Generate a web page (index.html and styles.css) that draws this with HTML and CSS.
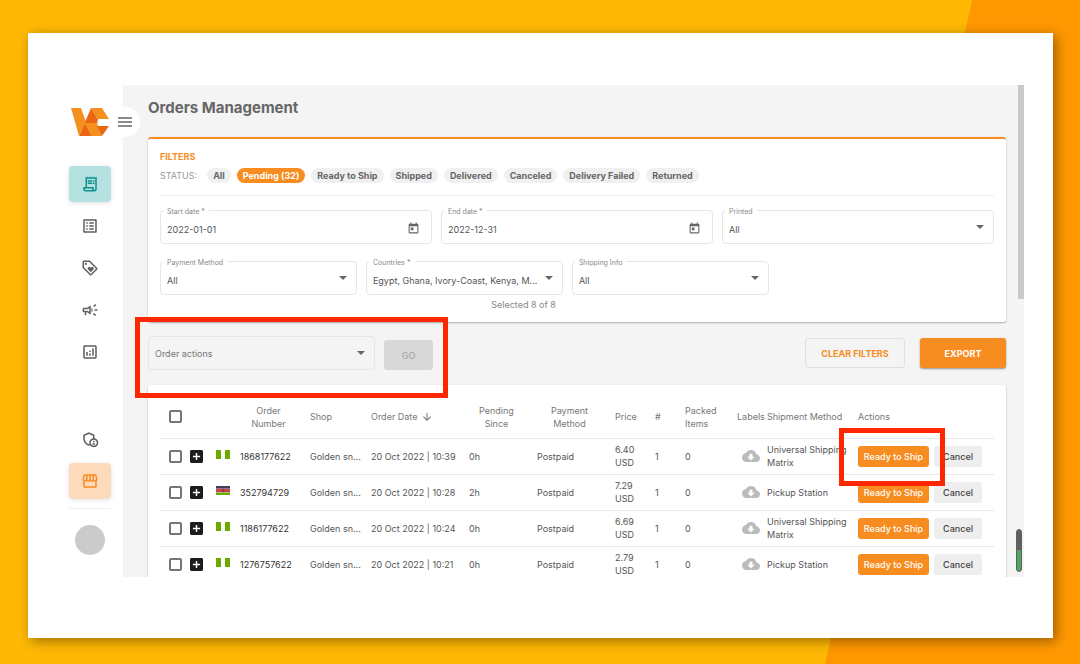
FILE: index.html
```html
<!DOCTYPE html>
<html lang="en">
<head>
    <meta charset="UTF-8">
    <meta name="viewport" content="width=device-width, initial-scale=1.0">
    <title>Orders Management</title>
    <link rel="stylesheet" href="styles.css">
</head>
<body>
    <!-- shared icons -->
    <svg class="sprite" aria-hidden="true">
        <symbol id="calendar" viewBox="0 0 24 24"><path d="M19 3h-1V1h-2v2H8V1H6v2H5c-1.11 0-1.99.9-1.99 2L3 19c0 1.1.89 2 2 2h14c1.1 0 2-.9 2-2V5c0-1.1-.9-2-2-2zm0 16H5V8h14v11zM7 10h5v5H7z"/></symbol>
        <symbol id="add-box" viewBox="3 3 18 18"><path d="M19 3H5c-1.11 0-2 .9-2 2v14c0 1.1.89 2 2 2h14c1.1 0 2-.9 2-2V5c0-1.1-.9-2-2-2zm-2 10h-4v4h-2v-4H7v-2h4V7h2v4h4v2z"/></symbol>
        <symbol id="cloud" viewBox="0 0 24 24"><path d="M19.35 10.04C18.67 6.59 15.64 4 12 4 9.11 4 6.6 5.64 5.35 8.04 2.34 8.36 0 10.91 0 14c0 3.31 2.69 6 6 6h13c2.76 0 5-2.24 5-5 0-2.64-2.05-4.78-4.65-4.96zM17 13l-5 5-5-5h3V9h4v4h3z"/></symbol>
        <symbol id="nigeria" viewBox="0 0 14 9"><path fill="#6bab00" d="M0 0h5v9H0zM9 0h5v9H9z"/></symbol>
        <symbol id="kenya" viewBox="0 0 14 9">
            <path fill="#3d3f52" d="M0 0h14v3H0z"/>
            <path fill="#e9e4e6" d="M0 2.6h14v4H0z"/>
            <path fill="#d43f4f" d="M0 3h14v3H0z"/>
            <path fill="#6bab00" d="M0 6.4h14V9H0z"/>
            <ellipse cx="7" cy="4.5" rx="1.2" ry="2" fill="#a8344a"/>
        </symbol>
    </svg>

    <div class="sheet">
        <div class="app">
            <aside class="sidebar">
                <a class="logo" href="#" aria-label="Home">
                    <svg viewBox="0 0 38 28">
                        <path fill="#ec6514" d="M20 0l7 11-1 5H14v-2zM14 15l7 13H8z"/>
                        <path fill="#f39020" d="M0 0h10l5 14-7 14z"/>
                        <path fill="#f39020" d="M20 0h11l7 11H26zM14 15h12l5 13H20z"/>
                        <path fill="#ec6514" d="M26 18h12l-7 10z"/>
                    </svg>
                </a>
                <button class="menu-toggle" aria-label="Toggle menu">
                    <svg viewBox="0 0 14 10"><path d="M0 1h14M0 5h14M0 9h14"/></svg>
                </button>
                <nav class="nav">
                    <a href="#" class="nav-item active" aria-label="Orders">
                        <svg viewBox="0 0 24 24"><path d="M19.5 3.5L18 2l-1.5 1.5L15 2l-1.5 1.5L12 2l-1.5 1.5L9 2 7.5 3.5 6 2v14H3v3c0 1.66 1.34 3 3 3h12c1.66 0 3-1.34 3-3V2l-1.5 1.5zM15 20H6c-.55 0-1-.45-1-1v-1h10v2zm4-1c0 .55-.45 1-1 1s-1-.45-1-1v-3H8V5h11v14z"/><path d="M9 7h6v2H9zM16 7h2v2h-2zM9 10h6v2H9zM16 10h2v2h-2z"/></svg>
                    </a>
                    <a href="#" class="nav-item" aria-label="Products">
                        <svg viewBox="0 0 24 24"><path d="M19 5v14H5V5h14m1.1-2H3.9c-.5 0-.9.4-.9.9v16.2c0 .4.4.9.9.9h16.2c.4 0 .9-.5.9-.9V3.9c0-.5-.5-.9-.9-.9zM11 7h6v2h-6V7zm0 4h6v2h-6v-2zm0 4h6v2h-6zM7 7h2v2H7zm0 4h2v2H7zm0 4h2v2H7z"/></svg>
                    </a>
                    <a href="#" class="nav-item" aria-label="Promotions">
                        <svg viewBox="0 0 24 24"><path d="M21.41 11.58l-9-9C12.05 2.22 11.55 2 11 2H4c-1.1 0-2 .9-2 2v7c0 .55.22 1.05.59 1.42l9 9c.36.36.86.58 1.41.58s1.05-.22 1.41-.59l7-7c.37-.36.59-.86.59-1.41s-.23-1.06-.59-1.42zM13 20.01L4 11V4h7v-.01l9 9-7 7.02z"/><circle cx="6.5" cy="6.5" r="1.5"/><path d="M8.9 12.55c0 .57.23 1.07.6 1.45l3.5 3.5 3.5-3.5c.37-.37.6-.89.6-1.45 0-1.13-.92-2.05-2.05-2.05-.57 0-1.08.23-1.45.6l-.6.6-.6-.59c-.37-.38-.89-.61-1.45-.61-1.13 0-2.05.92-2.05 2.05z"/></svg>
                    </a>
                    <a href="#" class="nav-item" aria-label="Advertising">
                        <svg viewBox="0 0 24 24"><path d="M18 11v2h4v-2zM16 17.61c.96.71 2.21 1.65 3.2 2.39.4-.53.8-1.07 1.2-1.6-.99-.74-2.24-1.68-3.2-2.4-.4.54-.8 1.08-1.2 1.61zM20.4 5.6C20 5.07 19.6 4.53 19.2 4c-.99.74-2.24 1.68-3.2 2.4.4.53.8 1.07 1.2 1.6.96-.72 2.21-1.65 3.2-2.4zM4 9c-1.1 0-2 .9-2 2v2c0 1.1.9 2 2 2h1v4h2v-4h1l5 3V6L8 9H4zm5.03 1.71L11 9.53v4.94l-1.97-1.18-.48-.29H4v-2h4.55l.48-.29zM15.5 12c0-1.33-.58-2.53-1.5-3.35v6.69c.92-.81 1.5-2.01 1.5-3.34z"/></svg>
                    </a>
                    <a href="#" class="nav-item" aria-label="Analytics">
                        <svg viewBox="0 0 24 24"><path d="M19 3H5c-1.1 0-2 .9-2 2v14c0 1.1.9 2 2 2h14c1.1 0 2-.9 2-2V5c0-1.1-.9-2-2-2zm0 16H5V5h14v14zM7 12h2v5H7zM15 7h2v10h-2zM11 14h2v3h-2zM11 10h2v2h-2z"/></svg>
                    </a>
                </nav>
                <nav class="nav nav-bottom">
                    <a href="#" class="nav-item" aria-label="Administration">
                        <svg viewBox="0 0 24 24"><circle cx="17" cy="15.5" r="1.12"/><path d="M17 17.5c-.73 0-2.19.36-2.24 1.08.5.71 1.32 1.17 2.24 1.17s1.74-.46 2.24-1.17c-.05-.72-1.51-1.08-2.24-1.08z"/><path d="M18 11.09V6.27L10.5 3 3 6.27v4.91c0 4.54 3.2 8.79 7.5 9.82.55-.13 1.08-.32 1.6-.55C13.18 21.99 14.97 23 17 23c3.31 0 6-2.69 6-6 0-2.97-2.16-5.43-5-5.91zM11 17c0 .56.08 1.11.23 1.62-.24.11-.48.22-.73.3-3.17-1-5.5-4.24-5.5-7.74v-3.6l5.5-2.4 5.5 2.4v3.51c-2.84.48-5 2.94-5 5.91zm6 4c-2.21 0-4-1.79-4-4s1.79-4 4-4 4 1.79 4 4-1.79 4-4 4z"/></svg>
                    </a>
                    <a href="#" class="nav-item store" aria-label="Store">
                        <svg viewBox="0 0 24 24"><path d="M21.9 8.89l-1.05-4.37c-.22-.9-1-1.52-1.91-1.52H5.05c-.9 0-1.69.63-1.9 1.52L2.1 8.89c-.24 1.02-.02 2.06.62 2.88.08.11.19.19.28.29V19c0 1.1.9 2 2 2h14c1.1 0 2-.9 2-2v-6.94c.09-.09.2-.18.28-.28.64-.82.87-1.87.62-2.89zm-2.99-3.9l1.05 4.37c.1.42.01.84-.25 1.17-.14.18-.44.47-.94.47-.61 0-1.14-.49-1.21-1.14L16.98 5l1.93-.01zM13 5h1.96l.54 4.52c.05.39-.07.78-.33 1.07-.22.26-.54.41-.95.41-.67 0-1.22-.59-1.22-1.31V5zM8.49 9.52L9.04 5H11v4.69c0 .72-.55 1.31-1.29 1.31-.34 0-.65-.15-.89-.41-.25-.29-.37-.68-.33-1.07zm-4.45-.16L5.05 5h1.97l-.58 4.86c-.08.65-.6 1.14-1.21 1.14-.49 0-.8-.29-.93-.47-.27-.32-.36-.75-.26-1.17zM5 19v-6.03c.08.01.15.03.23.03.87 0 1.66-.36 2.24-.95.6.6 1.4.95 2.31.95.87 0 1.65-.36 2.23-.93.59.57 1.39.93 2.29.93.84 0 1.64-.35 2.24-.95.58.59 1.37.95 2.24.95.08 0 .15-.02.23-.03V19H5z"/></svg>
                    </a>
                </nav>
                <div class="avatar"></div>
            </aside>

            <main class="main">
                <h1>Orders Management</h1>

                <section class="card filters">
                    <h2>FILTERS</h2>
                    <div class="statuses">
                        <span class="status-label">STATUS:</span>
                        <button class="chip">All</button>
                        <button class="chip selected">Pending (32)</button>
                        <button class="chip">Ready to Ship</button>
                        <button class="chip">Shipped</button>
                        <button class="chip">Delivered</button>
                        <button class="chip">Canceled</button>
                        <button class="chip">Delivery Failed</button>
                        <button class="chip">Returned</button>
                    </div>
                    <div class="fields">
                        <div class="field">
                            <label for="start">Start date *</label>
                            <input type="text" id="start" value="2022-01-01">
                            <button class="pick" aria-label="Pick start date"><svg><use href="#calendar"/></svg></button>
                        </div>
                        <div class="field">
                            <label for="end">End date *</label>
                            <input type="text" id="end" value="2022-12-31">
                            <button class="pick" aria-label="Pick end date"><svg><use href="#calendar"/></svg></button>
                        </div>
                        <div class="field drop">
                            <label for="printed">Printed</label>
                            <select id="printed"><option>All</option></select>
                        </div>
                    </div>
                    <div class="fields narrow">
                        <div class="field drop">
                            <label for="payment">Payment Method</label>
                            <select id="payment"><option>All</option></select>
                        </div>
                        <div class="field drop">
                            <label for="countries">Countries *</label>
                            <select id="countries"><option>Egypt, Ghana, Ivory-Coast, Kenya, M...</option></select>
                        </div>
                        <div class="field drop">
                            <label for="shipping">Shipping Info</label>
                            <select id="shipping"><option>All</option></select>
                        </div>
                        <p class="hint">Selected 8 of 8</p>
                    </div>
                </section>

                <div class="toolbar">
                    <div class="order-actions">
                        <div class="field drop">
                            <select class="muted" aria-label="Order actions"><option>Order actions</option></select>
                        </div>
                        <button class="btn go" disabled>GO</button>
                        <span class="marker"></span>
                    </div>
                    <div class="toolbar-right">
                        <button class="btn clear">CLEAR FILTERS</button>
                        <button class="btn export">EXPORT</button>
                    </div>
                </div>

                <section class="card orders">
                    <table>
                        <colgroup>
                            <col class="c-check"><col class="c-plus"><col class="c-flag"><col class="c-number">
                            <col class="c-shop"><col class="c-date"><col class="c-pending"><col class="c-payment">
                            <col class="c-price"><col class="c-count"><col class="c-packed"><col class="c-labels">
                            <col class="c-shipment"><col class="c-actions">
                        </colgroup>
                        <thead>
                            <tr>
                                <th class="check"><input type="checkbox" aria-label="Select all orders"></th>
                                <th></th>
                                <th></th>
                                <th class="center">Order Number</th>
                                <th>Shop</th>
                                <th><span class="sort">Order Date <svg viewBox="0 0 24 24"><path d="M20 12l-1.41-1.41L13 16.17V4h-2v12.17l-5.58-5.59L4 12l8 8 8-8z"/></svg></span></th>
                                <th class="center">Pending Since</th>
                                <th class="center">Payment Method</th>
                                <th>Price</th>
                                <th>#</th>
                                <th>Packed Items</th>
                                <th>Labels</th>
                                <th>Shipment Method</th>
                                <th>Actions</th>
                            </tr>
                        </thead>
                        <tbody>
                            <tr>
                                <td class="check"><input type="checkbox" aria-label="Select order 1868177622"></td>
                                <td><button class="icon-btn" aria-label="Expand"><svg class="plus"><use href="#add-box"/></svg></button></td>
                                <td><svg class="flag"><use href="#nigeria"/></svg></td>
                                <td class="id">1868177622</td>
                                <td>Golden sn...</td>
                                <td>20 Oct 2022 | 10:39</td>
                                <td>0h</td>
                                <td>Postpaid</td>
                                <td class="wrap">6.40 USD</td>
                                <td>1</td>
                                <td>0</td>
                                <td><svg class="cloud"><use href="#cloud"/></svg></td>
                                <td class="wrap">Universal Shipping Matrix</td>
                                <td><div class="actions"><span class="marked"><button class="ship">Ready to Ship</button><span class="marker"></span></span><button class="cancel">Cancel</button></div></td>
                            </tr>
                            <tr>
                                <td class="check"><input type="checkbox" aria-label="Select order 352794729"></td>
                                <td><button class="icon-btn" aria-label="Expand"><svg class="plus"><use href="#add-box"/></svg></button></td>
                                <td><svg class="flag"><use href="#kenya"/></svg></td>
                                <td class="id">352794729</td>
                                <td>Golden sn...</td>
                                <td>20 Oct 2022 | 10:28</td>
                                <td>2h</td>
                                <td>Postpaid</td>
                                <td class="wrap">7.29 USD</td>
                                <td>1</td>
                                <td>0</td>
                                <td><svg class="cloud"><use href="#cloud"/></svg></td>
                                <td class="wrap">Pickup Station</td>
                                <td><div class="actions"><button class="ship">Ready to Ship</button><button class="cancel">Cancel</button></div></td>
                            </tr>
                            <tr>
                                <td class="check"><input type="checkbox" aria-label="Select order 1186177622"></td>
                                <td><button class="icon-btn" aria-label="Expand"><svg class="plus"><use href="#add-box"/></svg></button></td>
                                <td><svg class="flag"><use href="#nigeria"/></svg></td>
                                <td class="id">1186177622</td>
                                <td>Golden sn...</td>
                                <td>20 Oct 2022 | 10:24</td>
                                <td>0h</td>
                                <td>Postpaid</td>
                                <td class="wrap">6.69 USD</td>
                                <td>1</td>
                                <td>0</td>
                                <td><svg class="cloud"><use href="#cloud"/></svg></td>
                                <td class="wrap">Universal Shipping Matrix</td>
                                <td><div class="actions"><button class="ship">Ready to Ship</button><button class="cancel">Cancel</button></div></td>
                            </tr>
                            <tr>
                                <td class="check"><input type="checkbox" aria-label="Select order 1276757622"></td>
                                <td><button class="icon-btn" aria-label="Expand"><svg class="plus"><use href="#add-box"/></svg></button></td>
                                <td><svg class="flag"><use href="#nigeria"/></svg></td>
                                <td class="id">1276757622</td>
                                <td>Golden sn...</td>
                                <td>20 Oct 2022 | 10:21</td>
                                <td>0h</td>
                                <td>Postpaid</td>
                                <td class="wrap">2.79 USD</td>
                                <td>1</td>
                                <td>0</td>
                                <td><svg class="cloud"><use href="#cloud"/></svg></td>
                                <td class="wrap">Pickup Station</td>
                                <td><div class="actions"><button class="ship">Ready to Ship</button><button class="cancel">Cancel</button></div></td>
                            </tr>
                        </tbody>
                    </table>
                </section>
                <div class="scrollbar"></div>
                <div class="meter"></div>
            </main>
        </div>
    </div>
</body>
</html>
```
FILE: styles.css
```css
* {
    box-sizing: border-box;
}
body {
    margin: 0;
    height: 100vh;
    padding: 33px 27px 26px 28px;
    background-color: #ffb904;
    font-family: Inter, "Liberation Sans", sans-serif;
    font-size: 9px;
    color: #555;
    position: relative;
    overflow: hidden;
}
body::before {
    content: "";
    position: absolute;
    inset: 0;
    background: #ff9800;
    clip-path: polygon(90% 0, 100% 0, 100% 100%, 76.4% 100%);
}
button, input, select {
    font: inherit;
    color: inherit;
    margin: 0;
}
button {
    border: none;
    background: none;
    padding: 0;
    cursor: pointer;
    white-space: nowrap;
}
svg {
    display: block;
    fill: currentColor;
}
.sprite {
    position: absolute;
    width: 0;
    height: 0;
}
.sheet {
    position: relative;
    height: 100%;
    padding: 52px 29px 61px;
    background: #fff;
    box-shadow: 3px 3px 12px rgba(0, 0, 0, 0.4);
}
.app {
    display: flex;
    height: 100%;
}

/* sidebar */
.sidebar {
    position: relative;
    z-index: 1;
    flex: 0 0 66px;
    display: flex;
    flex-direction: column;
    align-items: center;
    padding: 23px 0 22px;
}
.logo svg {
    width: 38px;
    height: 28px;
}
.menu-toggle {
    position: absolute;
    top: 22px;
    right: -17px;
    width: 30px;
    height: 30px;
    border-radius: 50%;
    background: #fff;
}
.menu-toggle svg {
    width: 14px;
    height: 10px;
    margin: 0 auto;
    fill: none;
    stroke: #666;
    stroke-width: 1.4;
}
.nav {
    display: flex;
    flex-direction: column;
    gap: 6px;
    margin-top: 30px;
}
.nav-bottom {
    margin-top: auto;
    padding-bottom: 9px;
    border-bottom: 1px solid #eee;
}
.nav-item {
    display: flex;
    align-items: center;
    justify-content: center;
    width: 42px;
    height: 36px;
    border-radius: 4px;
    color: #5f5f5f;
}
.nav-item svg {
    width: 18px;
    height: 18px;
}
.nav-item.active {
    background: #b5e1e0;
    color: #0e908c;
    box-shadow: 0 1px 5px rgba(0, 0, 0, 0.12);
}
.nav-item.store {
    background: #fcdabb;
    color: #f78c20;
    box-shadow: 0 1px 5px rgba(0, 0, 0, 0.12);
}
.avatar {
    width: 30px;
    height: 30px;
    margin-top: 16px;
    border-radius: 50%;
    background: #cbcbcb;
}

/* content */
.main {
    position: relative;
    flex: 1;
    min-width: 0;
    padding: 13px 18px 0 25px;
    background: #f4f4f4;
    overflow: hidden;
}
h1 {
    margin: 0 0 19px;
    font-size: 15px;
    line-height: 20px;
    font-weight: 700;
    color: #666;
}
.card {
    background: #fff;
    border-radius: 3px;
    padding: 0 12px;
    box-shadow: 0 1px 2px rgba(0, 0, 0, 0.3);
}
.filters {
    border-top: 2px solid #f78c20;
    height: 185px;
}
h2 {
    margin: 0;
    padding-top: 12px;
    font-size: 9px;
    line-height: 12px;
    font-weight: 700;
    color: #f78c20;
}
.statuses {
    display: flex;
    align-items: center;
    gap: 6px;
    padding: 5px 0 12px;
    border-bottom: 1px solid #eee;
}
.status-label {
    margin-right: 4px;
    color: #999;
}
.chip {
    height: 15px;
    padding: 0 6px;
    border-radius: 8px;
    background: #f0f0f0;
    font-weight: 700;
    color: #666;
}
.chip.selected {
    background: #f78c20;
    color: #fff;
}
.fields {
    display: grid;
    grid-template-columns: repeat(3, 1fr);
    column-gap: 9px;
    margin-top: 14px;
}
.fields.narrow {
    width: 73%;
    margin-top: 17px;
}
.field {
    position: relative;
    height: 34px;
    border: 1px solid #e6e6e6;
    border-radius: 4px;
}
.field label {
    position: absolute;
    top: -3px;
    left: 2px;
    padding: 0 4px;
    background: #fff;
    font-size: 7px;
    line-height: 8px;
    color: #888;
}
.field input, .field select {
    width: 100%;
    height: 100%;
    padding: 5px 24px 0 6px;
    border: none;
    background: none;
    appearance: none;
    outline: none;
    text-overflow: ellipsis;
}
.field select.muted {
    padding-top: 0;
    color: #777;
}
.drop::after {
    content: "";
    position: absolute;
    top: 14px;
    right: 9px;
    border: 4px solid transparent;
    border-top-color: #666;
    border-bottom: none;
}
.pick {
    position: absolute;
    top: 11px;
    right: 11px;
    color: #666;
}
.pick svg {
    width: 13px;
    height: 13px;
}
.hint {
    grid-column: 2;
    margin: 4px 7px 0 0;
    line-height: 12px;
    text-align: right;
    color: #888;
}

/* toolbar */
.toolbar {
    display: flex;
    justify-content: space-between;
    padding: 14px 0 15px;
}
.order-actions {
    position: relative;
    display: flex;
    align-items: flex-end;
    gap: 9px;
}
.order-actions .field {
    width: 227px;
}
.toolbar-right {
    display: flex;
    align-items: center;
    gap: 15px;
}
.btn {
    height: 30px;
    border-radius: 3px;
    font-weight: 700;
}
.go {
    width: 49px;
    background: #d8d8d8;
    color: #aaa;
    font-weight: 500;
}
.clear {
    width: 100px;
    border: 1px solid #e0e0e0;
    color: #f78c20;
}
.export {
    width: 86px;
    background: #f78c20;
    color: #fff;
    box-shadow: 0 1px 2px rgba(0, 0, 0, 0.4);
}
.marker {
    position: absolute;
    z-index: 2;
    border: 5px solid #ff2600;
    pointer-events: none;
}
.order-actions .marker {
    inset: -19px -15px -28px -13px;
}
.marked {
    position: relative;
}
.marked .marker {
    inset: -18px -16px -19px -19px;
}

/* orders table */
table {
    width: 100%;
    table-layout: fixed;
    border-collapse: collapse;
}
.c-check { width: 30px; }
.c-plus { width: 26px; }
.c-flag { width: 24px; }
.c-number { width: 70px; }
.c-shop { width: 61px; }
.c-date { width: 98px; }
.c-pending { width: 68px; }
.c-payment { width: 78px; }
.c-price { width: 40px; }
.c-count { width: 30px; }
.c-packed { width: 52px; }
.c-labels { width: 30px; }
.c-shipment { width: 91px; }
.c-actions { width: 136px; }
th, td {
    height: 36px;
    padding: 0;
    border-bottom: 1px solid #e8e8e8;
    text-align: left;
    line-height: 13px;
    white-space: nowrap;
}
th {
    height: 53px;
    padding-top: 11px;
    font-weight: 400;
    color: #777;
    white-space: normal;
}
th:nth-last-child(-n+3) {
    white-space: nowrap;
}
th.center {
    padding-left: 4px;
    padding-right: 17px;
    text-align: center;
}
.check {
    padding-left: 9px;
}
.check input {
    display: block;
    width: 13px;
    height: 13px;
    border: 2px solid #757575;
    border-radius: 2px;
    appearance: none;
}
.id {
    color: #333;
}
.wrap {
    padding-right: 10px;
    white-space: normal;
}
.sort {
    display: flex;
    align-items: center;
    gap: 4px;
}
.sort svg {
    width: 12px;
    height: 12px;
}
.plus {
    width: 13px;
    height: 13px;
    color: #1c1c1c;
}
.icon-btn {
    display: block;
}
.flag {
    width: 14px;
    height: 9px;
    margin-bottom: 4px;
}
.cloud {
    width: 18px;
    height: 18px;
    margin-left: 5px;
    color: #bbb;
}
.actions {
    display: flex;
    gap: 5px;
}
.ship, .cancel {
    display: block;
    height: 21px;
    border-radius: 3px;
    font-weight: 500;
}
.ship {
    width: 71px;
    background: #f78c20;
    color: #fff;
}
.cancel {
    width: 48px;
    background: #eee;
    color: #444;
}
.scrollbar {
    position: absolute;
    top: 0;
    right: 0;
    width: 6px;
    height: 214px;
    background: #cacaca;
}
.meter {
    position: absolute;
    right: 2px;
    bottom: 5px;
    width: 6px;
    height: 43px;
    border: 1px solid #5f5f5f;
    border-radius: 3px;
    background: linear-gradient(#5f5f5f 48%, #4ea565 48%);
}
```
